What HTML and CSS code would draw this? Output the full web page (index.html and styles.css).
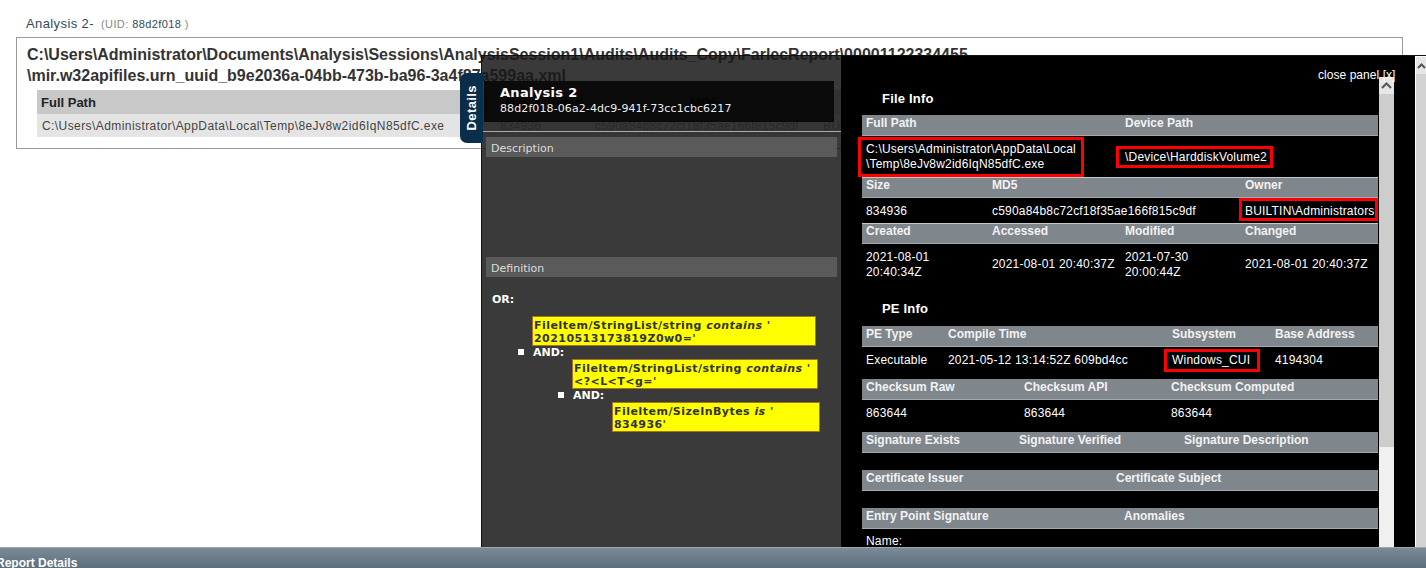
FILE: index.html
```html
<!DOCTYPE html>
<html lang="en">
<head>
  <meta charset="UTF-8">
  <title>Analysis 2</title>
  <link rel="stylesheet" href="styles.css">
</head>
<body>
  <div class="page">
    <div class="report">
      <h2 class="report-title">Analysis 2- <span class="uid">(UID: <b>88d2f018</b> )</span></h2>
      <div class="report-box">
        <h3 class="report-path">C:\Users\Administrator\Documents\Analysis\Sessions\AnalysisSession1\Audits\Audits_Copy\FarlecReport\00001122334455<br>\mir.w32apifiles.urn_uuid_b9e2036a-04bb-473b-ba96-3a4f87a599aa.xml</h3>
        <table class="report-table">
          <colgroup>
            <col class="col-path"><col class="col-size"><col class="col-md5"><col>
          </colgroup>
          <tr><th>Full Path</th><th class="th-size">Size in bytes</th><th class="th-md5">MD5</th><th></th></tr>
          <tr>
            <td>C:\Users\Administrator\AppData\Local\Temp\8eJv8w2id6IqN85dfC.exe</td>
            <td class="td-behind">834936</td>
            <td class="td-behind">c590a84b8c72cf18f35ae166f815c9df</td>
            <td class="td-behind">BUILTIN\Administrators</td>
          </tr>
        </table>
      </div>
    </div>
    <div class="footer-bar"><span>Report Details</span></div>
  </div>

  <div class="details-tab"><span>Details</span></div>

  <div class="panel">
    <div class="panel-left">
      <div class="panel-title">
        <div class="panel-name">Analysis 2</div>
        <div class="panel-uid">88d2f018-06a2-4dc9-941f-73cc1cbc6217</div>
      </div>
      <div class="panel-rule"></div>
      <div class="side-bar">Description</div>
      <div class="side-gap"></div>
      <div class="side-bar">Definition</div>
      <div class="tree">
        <div class="tree-op tree-root">OR:</div>
        <div class="tree-level">
          <div class="expr expr-a">FileItem/StringList/string <i>contains</i> '<br>20210513173819Z0w0='</div>
          <div class="tree-op tree-and">AND:</div>
          <div class="tree-level">
            <div class="expr expr-b">FileItem/StringList/string <i>contains</i> '<br>&lt;?&lt;L&lt;T&lt;g='</div>
            <div class="tree-op tree-and">AND:</div>
            <div class="tree-level">
              <div class="expr expr-c">FileItem/SizeInBytes <i>is</i> '<br>834936'</div>
            </div>
          </div>
        </div>
      </div>
    </div>

    <div class="panel-right">
      <a class="close-panel">close panel [x]</a>
      <div class="info">
        <h4 class="info-title info-title-first">File Info</h4>
        <div class="info-head cols-path"><span>Full Path</span><span>Device Path</span></div>
        <div class="info-row cols-path row-path">
          <span class="mark mark-full">C:\Users\Administrator\AppData\Local<br>\Temp\8eJv8w2id6IqN85dfC.exe</span>
          <span class="mark mark-device">\Device\HarddiskVolume2</span>
        </div>
        <div class="info-head cols-size ruled"><span>Size</span><span>MD5</span><span>Owner</span></div>
        <div class="info-row cols-size row-size">
          <span>834936</span>
          <span>c590a84b8c72cf18f35ae166f815c9df</span>
          <span class="mark mark-owner">BUILTIN\Administrators</span>
        </div>
        <div class="info-head cols-dates ruled"><span>Created</span><span>Accessed</span><span>Modified</span><span>Changed</span></div>
        <div class="info-row cols-dates row-dates">
          <span>2021-08-01 20:40:34Z</span>
          <span>2021-08-01 20:40:37Z</span>
          <span>2021-07-30 20:00:44Z</span>
          <span>2021-08-01 20:40:37Z</span>
        </div>
        <h4 class="info-title">PE Info</h4>
        <div class="info-head cols-pe"><span>PE Type</span><span>Compile Time</span><span>Subsystem</span><span>Base Address</span></div>
        <div class="info-row cols-pe row-pe">
          <span>Executable</span>
          <span>2021-05-12 13:14:52Z 609bd4cc</span>
          <span class="mark mark-subsystem">Windows_CUI</span>
          <span>4194304</span>
        </div>
        <div class="info-head cols-checksum"><span>Checksum Raw</span><span>Checksum API</span><span>Checksum Computed</span></div>
        <div class="info-row cols-checksum row-checksum"><span>863644</span><span>863644</span><span>863644</span></div>
        <div class="info-head cols-signature"><span>Signature Exists</span><span>Signature Verified</span><span>Signature Description</span></div>
        <div class="info-row row-empty"></div>
        <div class="info-head cols-cert"><span>Certificate Issuer</span><span>Certificate Subject</span></div>
        <div class="info-row row-empty"></div>
        <div class="info-head cols-entry"><span>Entry Point Signature</span><span>Anomalies</span></div>
        <div class="info-row row-name"><span>Name:</span></div>
      </div>
      <div class="scrollbar">
        <div class="scroll-up"><svg width="11" height="7" viewBox="0 0 11 7"><path d="M1 6l4.5-4.5L10 6" fill="none" stroke="#555" stroke-width="2"/></svg></div>
        <div class="scroll-thumb"></div>
      </div>
    </div>
    <div class="page-scroll">
      <div class="scroll-up"><svg width="9" height="6" viewBox="0 0 9 6"><path d="M1 5l3.5-3.5L8 5" fill="none" stroke="#555" stroke-width="2"/></svg></div>
    </div>
  </div>
</body>
</html>
```

FILE: styles.css
```css
html, body {
  margin: 0;
  height: 100%;
  overflow: hidden;
  background: #fff;
}
body {
  font-family: "Liberation Sans", Arial, sans-serif;
  font-size: 12px;
  color: #333;
}
.page {
  height: 568px;
  display: flex;
  flex-direction: column;
}
.report {
  flex: 1;
  padding: 16px 23px 0 16px;
}
.report-title {
  margin: 0 0 5px 10px;
  font-size: 13px;
  line-height: 16px;
  font-weight: normal;
  letter-spacing: .4px;
  color: #2d4a5c;
}
.uid {
  margin-left: 3px;
  font-size: 11px;
  color: #888;
}
.uid b {
  font-weight: normal;
  color: #2d4a5c;
}
.report-box {
  border: 1px solid #999;
  padding: 6px 10px 11px 10px;
  height: 93px;
}
.report-path {
  margin: 0 0 4px 0;
  font-size: 16px;
  line-height: 21px;
  font-weight: bold;
  color: #333;
  white-space: nowrap;
}
.report-table {
  width: calc(100% - 10px);
  margin-left: 10px;
  border-collapse: collapse;
  table-layout: fixed;
}
.report-table th {
  height: 24px;
  padding: 0 4px;
  background: #c8c8c8;
  text-align: left;
  font-size: 13px;
  color: #222;
}
.report-table .th-size { padding-left: 8px; color: #000; }
.report-table .th-md5 { text-align: center; color: #000; }
.report-table td {
  height: 23px;
  padding: 0 5px;
  background: #e4e4e4;
  color: #444;
  letter-spacing: .42px;
  white-space: nowrap;
  overflow: hidden;
}
.report-table .td-behind {
  color: #888;
  letter-spacing: .2px;
}
.col-path { width: 458px; }
.col-size { width: 95px; }
.col-md5 { width: 228px; }

.footer-bar {
  height: 20px;
  margin-top: 1px;
  border-top: 1px solid #a0a8ae;
  background: linear-gradient(#7a8a97, #5c6e7c);
  color: #fff;
  font-weight: bold;
  font-size: 12px;
  line-height: 30px;
  overflow: hidden;
}
.footer-bar span {
  margin-left: -4px;
}

.details-tab {
  position: absolute;
  left: 460px;
  top: 73px;
  width: 23px;
  height: 70px;
  border-radius: 7px 0 0 7px;
  background: linear-gradient(90deg, #0b2c47, #06324f);
  display: flex;
  align-items: center;
  justify-content: center;
  z-index: 2;
}
.details-tab span {
  writing-mode: vertical-rl;
  transform: rotate(180deg);
  font-size: 13px;
  font-weight: bold;
  letter-spacing: .4px;
  color: #fff;
}

.panel {
  position: absolute;
  left: 481px;
  top: 55px;
  right: 0;
  height: 492px;
  display: flex;
  border-top: 1px solid #111;
  box-sizing: border-box;
}
.panel-left {
  width: 360px;
  box-sizing: border-box;
  border-left: 1px solid #111;
  background: rgba(23, 23, 23, .85);
  font-family: "DejaVu Sans", Verdana, sans-serif;
  font-size: 11px;
  color: #eee;
}
.panel-title {
  margin: 25px 7px 0 2px;
  height: 41px;
  box-sizing: border-box;
  padding: 3px 0 0 16px;
  background: rgba(0, 0, 0, .8);
}
.panel-name {
  font-size: 13px;
  font-weight: bold;
  line-height: 17px;
  letter-spacing: .3px;
  color: #fff;
}
.panel-uid {
  line-height: 16px;
  letter-spacing: .1px;
}
.panel-rule {
  height: 1px;
  margin-top: 9px;
  background: #aaa;
}
.side-bar {
  margin: 5px 4px 0 4px;
  height: 20px;
  line-height: 23px;
  padding-left: 5px;
  background: #5a5a5a;
  color: #ddd;
}
.side-gap {
  height: 95px;
}
.tree {
  padding: 16px 0 0 10px;
}
.tree-op {
  font-weight: bold;
  color: #fff;
}
.tree-root {
  line-height: 13px;
  margin-bottom: 10px;
}
.tree-level {
  margin-left: 40px;
}
.expr {
  box-sizing: border-box;
  height: 30px;
  padding: 2px 0 0 1px;
  border: 1px solid #a8702a;
  background: #ffff00;
  color: #333;
  font-weight: bold;
  line-height: 13px;
  letter-spacing: .45px;
  white-space: nowrap;
}
.expr i {
  font-style: italic;
}
.expr-a { width: 284px; }
.expr-b { width: 246px; }
.expr-c { width: 208px; }
.tree-and {
  display: flex;
  align-items: center;
  gap: 9px;
  height: 13px;
  margin-left: -14px;
}
.tree-and::before {
  content: "";
  width: 6px;
  height: 6px;
  margin-top: -2px;
  background: #fff;
}

.panel-right {
  position: relative;
  flex: 1;
  display: flex;
  background: #000;
  color: #fff;
  padding: 21px 0 0 21px;
  letter-spacing: .2px;
  overflow: hidden;
}
.close-panel {
  position: absolute;
  top: 12px;
  left: 477px;
  line-height: 14px;
  font-size: 12px;
  letter-spacing: .05px;
  white-space: nowrap;
}
.info {
  width: 516px;
  flex: none;
}
.info-title {
  margin: 0;
  height: 41px;
  box-sizing: border-box;
  padding: 16px 0 0 20px;
  font-size: 13px;
  line-height: 16px;
  font-weight: bold;
  letter-spacing: .2px;
}
.info-title-first {
  height: 38px;
  padding-top: 14px;
}
.info-head {
  display: grid;
  height: 21px;
  box-sizing: border-box;
  padding-top: 1px;
  background: #7f868c;
  border-bottom: 1px solid #a4a9ad;
  font-weight: bold;
  line-height: 15px;
  letter-spacing: 0;
  color: #f2f2f2;
}
.info-head.ruled {
  padding-top: 0;
  border-top: 1px solid #c8c8c8;
}
.info-head span {
  padding-left: 4px;
}
.info-row {
  display: grid;
  line-height: 15px;
}
.info-row > span:not(.mark) {
  padding: 0 4px;
}
.cols-path { grid-template-columns: 259px 1fr; }
.cols-size { grid-template-columns: 126px 253px 1fr; }
.cols-dates { grid-template-columns: 126px 133px 120px 1fr; }
.cols-pe { grid-template-columns: 82px 224px 103px 1fr; }
.cols-checksum { grid-template-columns: 158px 147px 1fr; }
.cols-signature { grid-template-columns: 153px 165px 1fr; }
.cols-cert { grid-template-columns: 250px 1fr; }
.cols-entry { grid-template-columns: 258px 1fr; }
.row-path { height: 41px; align-items: center; }
.row-size { height: 25px; align-items: start; }
.row-size > span:not(.mark) { padding-top: 6px; }
.row-dates { height: 41px; align-items: center; }
.row-pe { height: 32px; align-items: start; }
.row-pe > span:not(.mark) { padding-top: 6px; }
.row-checksum { height: 32px; padding-top: 6px; box-sizing: border-box; }
.row-empty { height: 17px; }
.row-name { padding-top: 5px; }
.mark {
  border: 3px solid #f00;
  box-sizing: border-box;
  white-space: nowrap;
}
.mark-full {
  margin: 1px 0 0 -4px;
  width: 226px;
  height: 40px;
  padding: 2px 0 0 5px;
}
.mark-device {
  justify-self: start;
  margin-left: -5px;
  height: 22px;
  padding: 1px 0 0 6px;
  width: 157px;
}
.mark-owner {
  margin-left: -2px;
  height: 23px;
  padding: 3px 0 0 3px;
}
.mark-subsystem {
  justify-self: start;
  margin: 2px 0 0 -4px;
  width: 96px;
  height: 23px;
  padding: 1px 0 0 5px;
}

.scrollbar {
  width: 15px;
  margin-left: 1px;
  display: flex;
  flex-direction: column;
  background: #f0f0f0;
}
.scroll-up {
  height: 17px;
  background: #e6e6e6;
  display: flex;
  align-items: center;
  justify-content: center;
}
.scroll-thumb {
  height: 353px;
  background: #cdcdcd;
}
.page-scroll {
  width: 10px;
  margin-top: 1px;
  border-left: 1px solid #fff;
  background: #d2d2d2;
}
```
